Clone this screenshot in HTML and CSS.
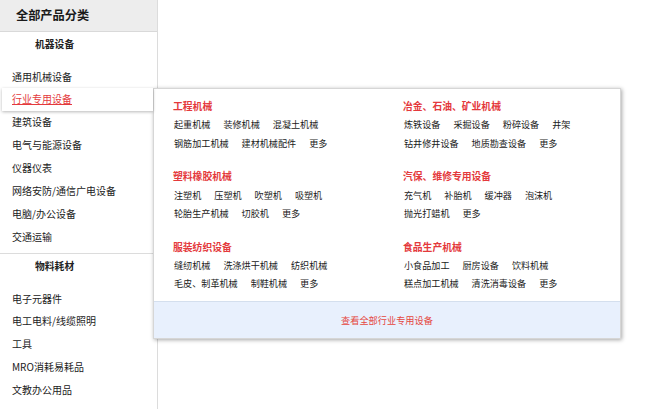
FILE: index.html
```html
<!DOCTYPE html>
<html lang="zh-CN">
<head>
<meta charset="utf-8">
<title>全部产品分类</title>
<link rel="stylesheet" href="styles.css">
</head>
<body>
<div class="page">
  <aside class="sidebar">
    <div class="head">全部产品分类</div>
    <div class="group">
      <div class="group-title">机器设备</div>
      <ul class="cats">
        <li><a>通用机械设备</a></li>
        <li class="active"><a>行业专用设备</a></li>
        <li><a>建筑设备</a></li>
        <li><a>电气与能源设备</a></li>
        <li><a>仪器仪表</a></li>
        <li><a>网络安防/通信广电设备</a></li>
        <li><a>电脑/办公设备</a></li>
        <li><a>交通运输</a></li>
      </ul>
    </div>
    <div class="group">
      <div class="group-title">物料耗材</div>
      <ul class="cats">
        <li><a>电子元器件</a></li>
        <li><a>电工电料/线缆照明</a></li>
        <li><a>工具</a></li>
        <li><a>MRO消耗易耗品</a></li>
        <li><a>文教办公用品</a></li>
      </ul>
    </div>
  </aside>

  <div class="flyout">
    <div class="flyout-body">
      <section class="sub">
        <h3>工程机械</h3>
        <div class="row"><a>起重机械</a><a>装修机械</a><a>混凝土机械</a></div>
        <div class="row"><a>钢筋加工机械</a><a>建材机械配件</a><a>更多</a></div>
      </section>
      <section class="sub">
        <h3>冶金、石油、矿业机械</h3>
        <div class="row"><a>炼铁设备</a><a>采掘设备</a><a>粉碎设备</a><a>井架</a></div>
        <div class="row"><a>钻井修井设备</a><a>地质勘查设备</a><a>更多</a></div>
      </section>
      <section class="sub">
        <h3>塑料橡胶机械</h3>
        <div class="row"><a>注塑机</a><a>压塑机</a><a>吹塑机</a><a>吸塑机</a></div>
        <div class="row"><a>轮胎生产机械</a><a>切胶机</a><a>更多</a></div>
      </section>
      <section class="sub">
        <h3>汽保、维修专用设备</h3>
        <div class="row"><a>充气机</a><a>补胎机</a><a>缓冲器</a><a>泡沫机</a></div>
        <div class="row"><a>抛光打蜡机</a><a>更多</a></div>
      </section>
      <section class="sub">
        <h3>服装纺织设备</h3>
        <div class="row"><a>缝纫机械</a><a>洗涤烘干机械</a><a>纺织机械</a></div>
        <div class="row"><a>毛皮、制革机械</a><a>制鞋机械</a><a>更多</a></div>
      </section>
      <section class="sub">
        <h3>食品生产机械</h3>
        <div class="row"><a>小食品加工</a><a>厨房设备</a><a>饮料机械</a></div>
        <div class="row"><a>糕点加工机械</a><a>清洗消毒设备</a><a>更多</a></div>
      </section>
    </div>
    <div class="flyout-foot"><a>查看全部行业专用设备</a></div>
  </div>
</div>
</body>
</html>
```

FILE: styles.css
```css
* {
  box-sizing: border-box;
}

html, body {
  margin: 0;
  padding: 0;
  background: #fff;
}

body {
  font-family: "Noto Sans CJK SC", "Noto Sans", sans-serif;
  color: #222;
}

a {
  color: inherit;
  text-decoration: none;
}

.page {
  position: relative;
  width: 650px;
  height: 409px;
  overflow: hidden;
}

.sidebar {
  width: 158px;
  height: 409px;
  border-right: 1px solid #dcdcdc;
  background: #fff;
}

.head {
  height: 32px;
  line-height: 30px;
  padding-left: 16px;
  background: #ededed;
  border-bottom: 1px solid #d9d9d9;
  font-size: 12.2px;
  font-weight: bold;
  color: #1a1a1a;
}

.group {
  padding-bottom: 4.5px;
}

.group + .group {
  border-top: 1px solid #dcdcdc;
}

.group-title {
  padding-top: 1px;
  padding-left: 35px;
  line-height: 23px;
  font-size: 9.8px;
  font-weight: bold;
  color: #222;
}

.cats {
  list-style: none;
  margin: 9.6px 0 0;
  padding: 0;
}

.cats li {
  height: 22.86px;
  line-height: 22.86px;
  padding-left: 12px;
  font-size: 10px;
  color: #222;
  white-space: nowrap;
}

.cats li.active {
  position: relative;
  z-index: 2;
  margin-left: 2px;
  width: 151px;
  padding-left: 10px;
  background: #fff;
  box-shadow: 0 1px 3px rgba(0, 0, 0, 0.28);
}

.cats li.active a {
  color: #e4393c;
  text-decoration: underline;
}

.flyout {
  position: absolute;
  z-index: 1;
  left: 153px;
  top: 88px;
  width: 468px;
  height: 251px;
  background: #fff;
  border: 1px solid #d6d6d6;
  box-shadow: 1px 1px 4px rgba(0, 0, 0, 0.35);
  display: flex;
  flex-direction: column;
}

.flyout-body {
  flex: 1;
  padding: 8px 0 0 19px;
  display: grid;
  grid-template-columns: 230px 230px;
  grid-auto-rows: 55px;
  row-gap: 15.3px;
  align-content: start;
}

.sub h3 {
  margin: 0;
  line-height: 18.3px;
  font-size: 9.8px;
  font-weight: bold;
  color: #e4393c;
}

.row {
  line-height: 18.3px;
  font-size: 9.1px;
  white-space: nowrap;
  color: #1a1a1a;
}

.row a {
  margin-right: 12px;
  padding-left: 1px;
}

.flyout-foot {
  height: 37px;
  line-height: 36px;
  text-align: center;
  background: #e8f0fd;
  border-top: 1px solid #d4dfee;
  font-size: 9.2px;
  color: #e5473e;
}
```
